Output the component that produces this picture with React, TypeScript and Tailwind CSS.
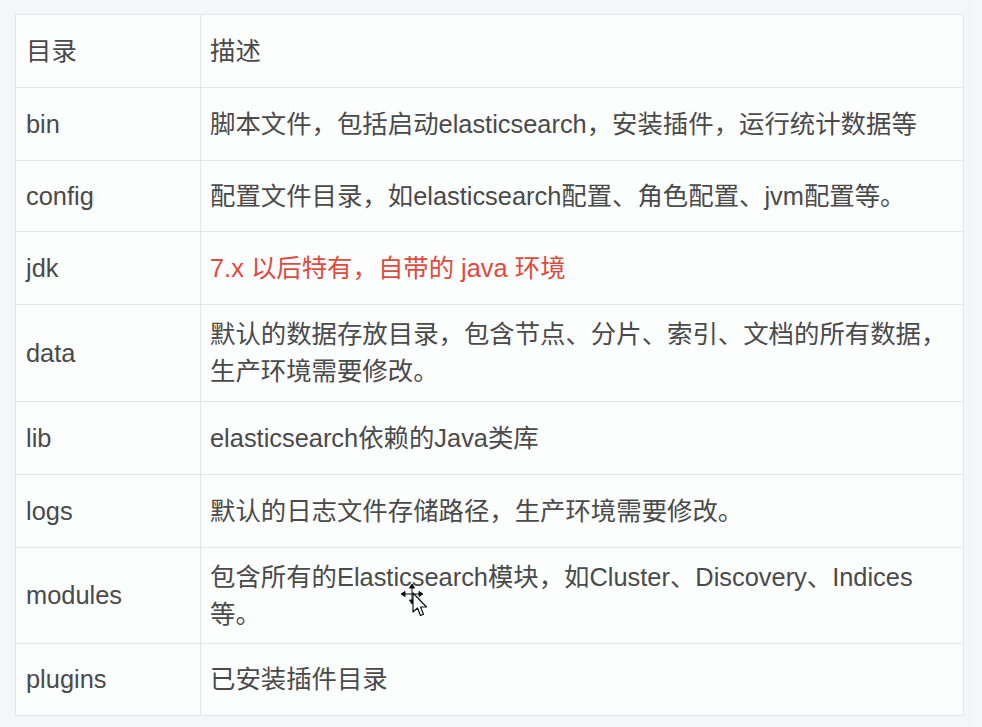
import React from "react";

type Row = { k: string; v: React.ReactNode; h: string; red?: boolean };

const rows: Row[] = [
  { k: "bin", v: "脚本文件，包括启动elasticsearch，安装插件，运行统计数据等", h: "h-[73px]" },
  { k: "config", v: "配置文件目录，如elasticsearch配置、角色配置、jvm配置等。", h: "h-[71px]" },
  { k: "jdk", v: "7.x 以后特有，自带的 java 环境", h: "h-[73px]", red: true },
  {
    k: "data",
    v: (
      <>
        默认的数据存放目录，包含节点、分片、索引、文档的所有数据，
        <br />
        生产环境需要修改。
      </>
    ),
    h: "h-[97px]",
  },
  { k: "lib", v: "elasticsearch依赖的Java类库", h: "h-[73px]" },
  { k: "logs", v: "默认的日志文件存储路径，生产环境需要修改。", h: "h-[73px]" },
  {
    k: "modules",
    v: (
      <>
        包含所有的Elasticsearch模块，如Cluster、Discovery、Indices
        <br />
        等。
      </>
    ),
    h: "h-[96px]",
  },
  { k: "plugins", v: "已安装插件目录", h: "h-[72px]" },
];

function Cursor() {
  return (
    <svg
      className="absolute left-[401px] top-[584px]"
      width="30"
      height="38"
      viewBox="0 0 30 38"
    >
      <g fill="#111" stroke="#111" strokeWidth="1">
        <line x1="2" y1="10" x2="20" y2="10" />
        <line x1="11" y1="2" x2="11" y2="18" />
        <polygon points="0,10 4,7.5 4,12.5" />
        <polygon points="22,10 18,7.5 18,12.5" />
        <polygon points="11,0 8.5,4 13.5,4" />
        <polygon points="11,20 8.5,16 13.5,16" />
      </g>
      <path
        d="M12 9 L12 28 L16.5 24 L19.5 31.5 L22.5 30.2 L19.5 23 L25.5 23 Z"
        fill="#fff"
        stroke="#111"
        strokeWidth="1.2"
        strokeLinejoin="round"
      />
    </svg>
  );
}

export default function App() {
  return (
    <div
      className="relative w-[982px] h-[727px] overflow-hidden bg-[#f5f6f7] pt-[14px] pl-[15px]"
      style={{ fontFamily: '"Liberation Sans", "Noto Sans CJK SC", sans-serif' }}
    >
      <div className="absolute right-[12px] top-0 h-full w-px bg-[#eceef0]" />
      <div className="w-[949px] border border-[#e2e4e6] bg-[#fcfdfd] text-[25.4px] text-[#4a4a4a]">
        <div className="flex h-[72px]">
          <div className="flex w-[184px] shrink-0 items-center pl-[10px]">目录</div>
          <div className="flex flex-1 items-center border-l border-[#e2e4e6] pl-[9px]">描述</div>
        </div>
        {rows.map((r) => (
          <div key={r.k} className={`flex border-t border-[#e2e4e6] ${r.h}`}>
            <div className="flex w-[184px] shrink-0 items-center pl-[10px]">{r.k}</div>
            <div
              className={`flex flex-1 items-center border-l border-[#e2e4e6] pl-[9px] leading-[37px] ${
                r.red ? "text-[#dd4b3f]" : ""
              }`}
            >
              <div>{r.v}</div>
            </div>
          </div>
        ))}
      </div>
      <Cursor />
    </div>
  );
}
